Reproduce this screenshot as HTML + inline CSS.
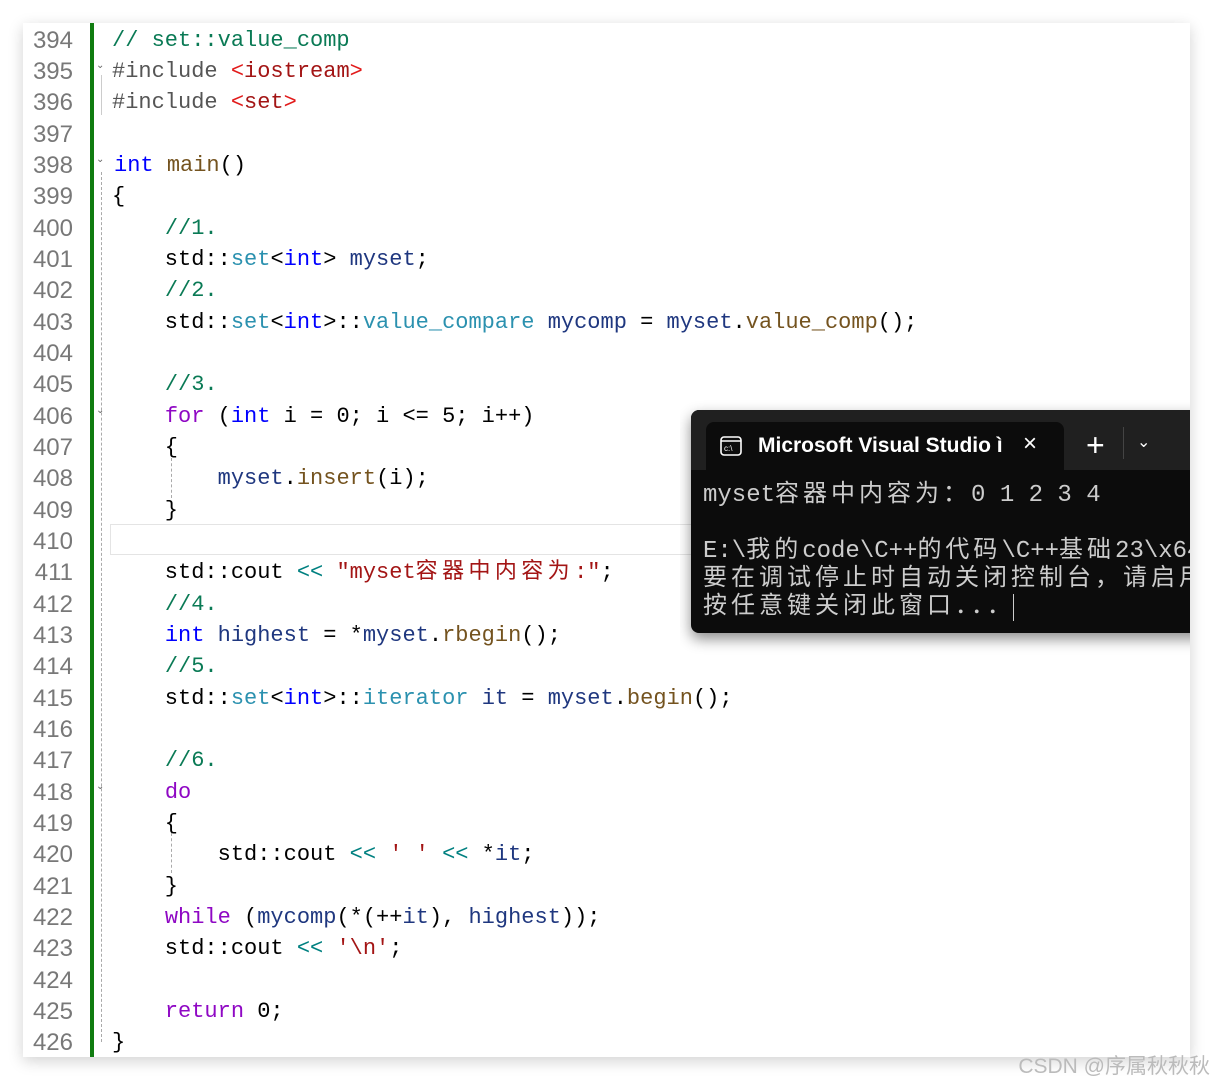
<!DOCTYPE html>
<html><head><meta charset="utf-8"><style>
body{margin:0;width:1214px;height:1083px;background:#fff;position:relative;overflow:hidden;font-family:"Liberation Mono","Noto Sans CJK SC",monospace;}
#ed{position:absolute;left:23px;top:23px;width:1167px;height:1034px;background:#fff;box-shadow:0 4px 14px rgba(0,0,0,.18);}
#gut{position:absolute;left:90px;top:23px;width:4px;height:1034px;background:#107c10;}
.ln{position:absolute;left:23px;width:50px;text-align:right;font-family:"Liberation Sans",sans-serif;font-size:24px;color:#787878;height:31.34px;line-height:31.34px;}
.cl{position:absolute;left:112px;font-size:22px;white-space:pre;height:31.34px;line-height:31.34px;color:#000;}
.cj{letter-spacing:4.4px}
.c{color:#0a7a55}.p{color:#555}.s{color:#a31515}.br{color:#e21b1b}.k{color:#0000ff}.f{color:#74531f}.t{color:#2b91af}.v{color:#1f377f}.m{color:#8f08c4}.o{color:#008080}
.g{position:absolute;border-left:1px dashed #aaa;width:0}
#cur{position:absolute;left:110px;top:524px;width:590px;height:29px;border:1px solid #e4e4e4;border-right:none}
#clip{position:absolute;left:680px;top:395px;width:510px;height:260px;overflow:hidden}
#term{position:absolute;left:11px;top:15px;width:530px;height:223px;background:#0c0c0c;border-radius:8px;box-shadow:0 6px 14px rgba(0,0,0,.45);overflow:hidden}
#bar{position:absolute;left:0;top:0;width:100%;height:60px;background:#202020}
#tab{position:absolute;left:15px;top:12px;width:358px;height:50px;background:#0c0c0c;border-radius:8px 8px 0 0}
.tt{position:absolute;color:#fff;font-family:"Liberation Sans",sans-serif;font-size:21px;font-weight:bold;}
.tl{position:absolute;left:12px;color:#ccc;font-size:24px;white-space:pre;line-height:28px}
.tl b{font-weight:normal;letter-spacing:4px}
</style></head><body>
<div id="ed"></div><div id="gut"></div>
<div id="lines"></div>
<div id="cur"></div>
<div id="clip"><div id="term">
<div id="bar"></div><div id="tab"></div>
<svg style="position:absolute;left:29px;top:26px" width="22" height="20"><rect x="1" y="1" width="20" height="18" rx="3" fill="none" stroke="#fff" stroke-width="1.6"/><line x1="1" y1="5" x2="21" y2="5" stroke="#fff" stroke-width="1.4"/><text x="4" y="15" font-size="8" fill="#fff" font-family="Liberation Sans">c:\</text></svg>
<div class="tt" style="left:67px;top:24px">Microsoft Visual Studio ì</div>
<div class="tt" style="left:332px;top:20px;font-weight:normal;font-size:24px">×</div>
<div class="tt" style="left:395px;top:17px;font-weight:normal;font-size:32px">+</div>
<div style="position:absolute;left:432px;top:17px;width:1px;height:32px;background:#444"></div>
<div class="tt" style="left:446px;top:22px;font-weight:normal;font-size:16px">⌄</div>
<div class="tl" style="top:72px">myset<b>容器中内容为：</b>0 1 2 3 4</div>
<div class="tl" style="top:128px">E:\<b>我的</b>code\C++<b>的代码</b>\C++<b>基础</b>23\x64</div>
<div class="tl" style="top:156px"><b>要在调试停止时自动关闭控制台，请启用</b></div>
<div class="tl" style="top:184px"><b>按任意键关闭此窗口．．．</b><span style="border-left:1px solid #ccc;margin-left:-2px"></span></div>
</div></div>
<div style="position:absolute;right:4px;top:1050px;color:#bbb;font-family:'Liberation Sans','Noto Sans CJK SC',sans-serif;font-size:21px">CSDN @序属秋秋秋</div>
<script>
var L=[
'<span class="c">// set::value_comp</span>',
'<span class="p">#include</span> <span class="br">&lt;</span><span class="s">iostream</span><span class="br">&gt;</span>',
'<span class="p">#include</span> <span class="br">&lt;</span><span class="s">set</span><span class="br">&gt;</span>',
'',
'<span class="k">int</span> <span class="f">main</span>()',
'{',
'    <span class="c">//1.</span>',
'    std::<span class="t">set</span>&lt;<span class="k">int</span>&gt; <span class="v">myset</span>;',
'    <span class="c">//2.</span>',
'    std::<span class="t">set</span>&lt;<span class="k">int</span>&gt;::<span class="t">value_compare</span> <span class="v">mycomp</span> = <span class="v">myset</span>.<span class="f">value_comp</span>();',
'',
'    <span class="c">//3.</span>',
'    <span class="m">for</span> (<span class="k">int</span> i = 0; i &lt;= 5; i++)',
'    {',
'        <span class="v">myset</span>.<span class="f">insert</span>(i);',
'    }',
'',
'    std::cout <span class="o">&lt;&lt;</span> <span class="s">"myset<span class="cj">容器中内容为</span>:"</span>;',
'    <span class="c">//4.</span>',
'    <span class="k">int</span> <span class="v">highest</span> = *<span class="v">myset</span>.<span class="f">rbegin</span>();',
'    <span class="c">//5.</span>',
'    std::<span class="t">set</span>&lt;<span class="k">int</span>&gt;::<span class="t">iterator</span> <span class="v">it</span> = <span class="v">myset</span>.<span class="f">begin</span>();',
'',
'    <span class="c">//6.</span>',
'    <span class="m">do</span>',
'    {',
'        std::cout <span class="o">&lt;&lt;</span> <span class="s">\' \'</span> <span class="o">&lt;&lt;</span> *<span class="v">it</span>;',
'    }',
'    <span class="m">while</span> (<span class="v">mycomp</span>(*(++<span class="v">it</span>), <span class="v">highest</span>));',
'    std::cout <span class="o">&lt;&lt;</span> <span class="s">\'\\n\'</span>;',
'',
'    <span class="m">return</span> 0;',
'}'];
var h='';
for(var i=0;i<L.length;i++){var y=24.5+i*31.34;
h+='<div class="ln" style="top:'+y+'px">'+(394+i)+'</div><div class="cl" style="top:'+y+'px'+(i==4?';left:114px':'')+'">'+L[i]+'</div>';}
h+='<div class="g" style="left:101px;top:75px;height:40px;border-left-style:solid;border-color:#ccc"></div>';
h+='<div class="g" style="left:101px;top:172px;height:870px"></div>';
h+='<div class="g" style="left:171px;top:458px;height:40px"></div>';
h+='<div class="g" style="left:171px;top:833px;height:40px"></div>';
[395,398,406,418].forEach(function(n){h+='<div style="position:absolute;left:96px;top:'+(23+(n-394)*31.34+6)+'px;font-size:10px;color:#666;font-family:Liberation Sans">⌄</div>';});
document.getElementById('lines').innerHTML=h;
</script>
</body></html>
